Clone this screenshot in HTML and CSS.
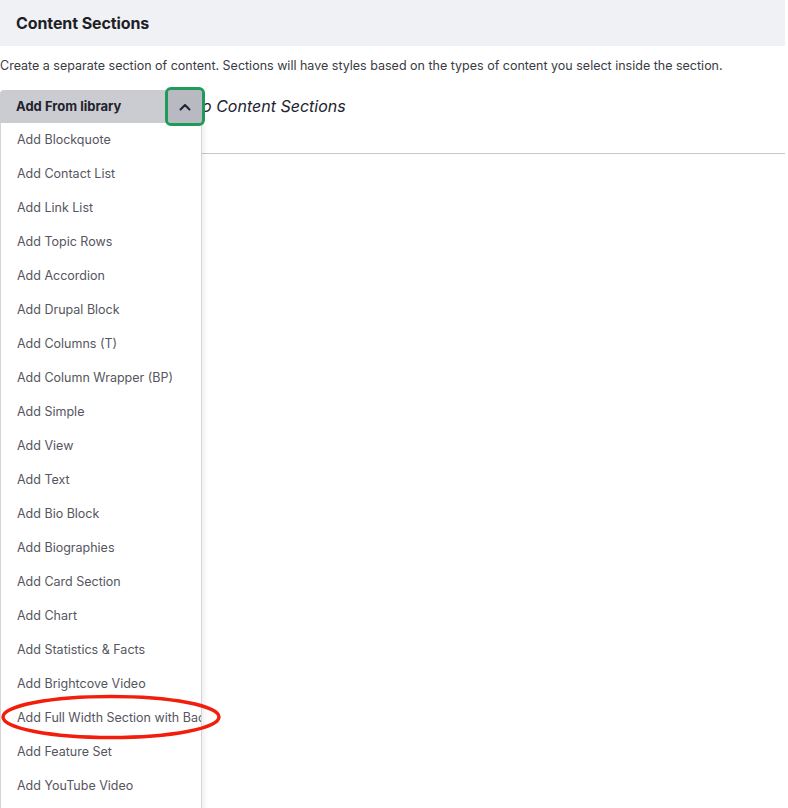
FILE: index.html
```html
<!DOCTYPE html>
<html>
<head>
<meta charset="utf-8">
<link rel="stylesheet" href="styles.css">
</head>
<body>
<div class="page">
  <div class="header"><h2 class="title">Content Sections</h2></div>
  <p class="desc">Create a separate section of content. Sections will have styles based on the types of content you select inside the section.</p>
  <div class="area">
    <div class="empty">No Content Sections</div>
    <div class="dropbutton">
      <div class="btnrow">
        <span class="main">Add From library</span>
        <span class="toggle"><svg width="12" height="8" viewBox="0 0 12 8"><path d="M1.5 6.5 L6 2 L10.5 6.5" fill="none" stroke="#1d2234" stroke-width="2" stroke-linecap="round" stroke-linejoin="round"/></svg></span>
      </div>
      <ul class="menu">
        <li>Add Blockquote</li>
        <li>Add Contact List</li>
        <li>Add Link List</li>
        <li>Add Topic Rows</li>
        <li>Add Accordion</li>
        <li>Add Drupal Block</li>
        <li>Add Columns (T)</li>
        <li>Add Column Wrapper (BP)</li>
        <li>Add Simple</li>
        <li>Add View</li>
        <li>Add Text</li>
        <li>Add Bio Block</li>
        <li>Add Biographies</li>
        <li>Add Card Section</li>
        <li>Add Chart</li>
        <li>Add Statistics &amp; Facts</li>
        <li>Add Brightcove Video</li>
        <li>Add Full Width Section with Background</li>
        <li>Add Feature Set</li>
        <li>Add YouTube Video</li>
      </ul>
    </div>
    <svg class="mark" width="226" height="48" viewBox="0 0 226 48"><ellipse cx="111" cy="23" rx="108" ry="20.5" fill="none" stroke="#f21d0a" stroke-width="3.4"/></svg>
  </div>
</div>
</body>
</html>
```
FILE: styles.css
```css
html, body { margin: 0; padding: 0; background: #fff; }
body { font-family: Inter, "Noto Sans", sans-serif; color: #222330; height: 808px; overflow: hidden; }
.page { width: 785px; }
.header { background: #f0f1f5; height: 46px; display: flex; align-items: center; padding: 0 16px; }
.title { margin: 0; font-size: 16px; font-weight: 700; color: #1e1f26; letter-spacing: -0.1px; }
.desc { margin: 0; padding-top: 12px; font-size: 12.5px; line-height: 16px; color: #3a3b44; height: 30px; box-sizing: content-box; }
.area { position: relative; }
.empty { padding-top: 7px; padding-left: 190px; height: 66px; box-sizing: border-box; border-bottom: 1px solid #c6c6ce; font-size: 16px; font-style: italic; color: #222330; line-height: 22px; }
.dropbutton { position: absolute; left: 0; top: 2px; width: 202px; }
.btnrow { display: flex; height: 33px; }
.main { width: 168px; background: #cbccd2; border-top-left-radius: 4px; display: flex; align-items: center; padding-left: 16px; padding-bottom: 1px; box-sizing: border-box; font-size: 13px; font-weight: 700; color: #22232c; }
.toggle { width: 34px; background: #b9bac1; display: flex; align-items: center; justify-content: center; outline: 3px solid #1f9a58; border-radius: 3px; }
.menu { list-style: none; margin: 0; padding: 0 0 12px; background: #fff; border-left: 1px solid #d4d4da; border-right: 1px solid #d4d4da; box-shadow: 3px 0 4px rgba(0,0,0,0.06); width: 202px; box-sizing: border-box; }
.menu li { height: 34px; line-height: 34px; padding-left: 16px; font-size: 12.5px; color: #55565e; white-space: nowrap; overflow: hidden; }
.mark { position: absolute; left: 0; top: 606px; }
```
